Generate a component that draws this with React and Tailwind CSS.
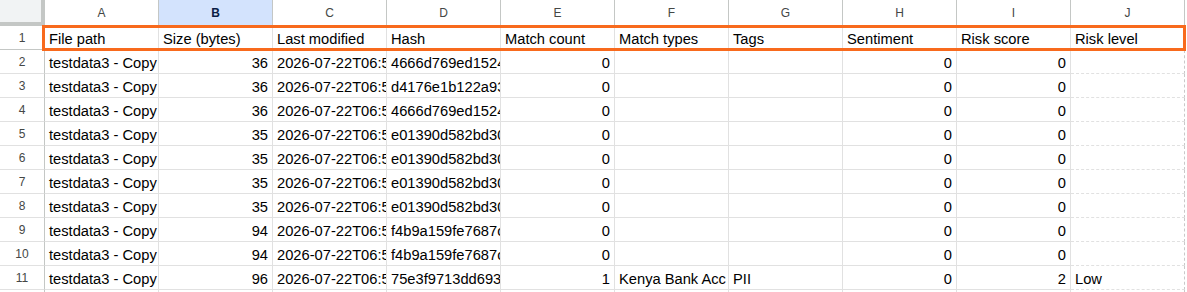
import React from "react";

const COLS = ["A", "B", "C", "D", "E", "F", "G", "H", "I", "J"];

const HEADERS = [
  "File path",
  "Size (bytes)",
  "Last modified",
  "Hash",
  "Match count",
  "Match types",
  "Tags",
  "Sentiment",
  "Risk score",
  "Risk level",
];

// [size, modified, hash, matchCount, matchTypes, tags, sentiment, riskScore, riskLevel]
const ROWS = [
  [36, "2026-07-22T06:55:41", "4666d769ed15246f0a3c", 0, "", "", 0, 0, ""],
  [36, "2026-07-22T06:55:41", "d4176e1b122a93b7c1de", 0, "", "", 0, 0, ""],
  [36, "2026-07-22T06:55:41", "4666d769ed15246f0a3c", 0, "", "", 0, 0, ""],
  [35, "2026-07-22T06:55:42", "e01390d582bd30a9f4e2", 0, "", "", 0, 0, ""],
  [35, "2026-07-22T06:55:42", "e01390d582bd30a9f4e2", 0, "", "", 0, 0, ""],
  [35, "2026-07-22T06:55:42", "e01390d582bd30a9f4e2", 0, "", "", 0, 0, ""],
  [35, "2026-07-22T06:55:42", "e01390d582bd30a9f4e2", 0, "", "", 0, 0, ""],
  [94, "2026-07-22T06:55:43", "f4b9a159fe7687c2d0b1", 0, "", "", 0, 0, ""],
  [94, "2026-07-22T06:55:43", "f4b9a159fe7687c2d0b1", 0, "", "", 0, 0, ""],
  [96, "2026-07-22T06:57:10", "75e3f9713dd6934ab8c5", 1, "Kenya Bank Acc No", "PII", 0, 2, "Low"],
];

const cellBase =
  "h-[24px] w-[114px] shrink-0 flex items-end pb-[1px] px-[4px] overflow-hidden whitespace-nowrap border-b border-r border-[#e1e1e1] leading-[17px]";

function Cell({ value, num, last }) {
  return (
    <div
      className={`${cellBase} ${num ? "justify-end" : "justify-start"} ${
        last ? "border-r-[#c9c9c9] border-dashed" : ""
      }`}
    >
      {value}
    </div>
  );
}

export default function App() {
  return (
    <div className="relative h-[292px] w-[1187px] overflow-hidden bg-white font-['Liberation_Sans',Arial,sans-serif] text-[14.7px] text-black">
      {/* column letters */}
      <div className="flex h-[26px]">
        <div className="h-[26px] w-[45px] shrink-0 border-b-[4px] border-r-[4px] border-[#c4c7c5] bg-[#f1f3f4]" />
        {COLS.map((c) => (
          <div
            key={c}
            className={`flex h-[26px] w-[114px] shrink-0 items-center justify-center border-b border-r border-[#c4c7c5] text-[12px] ${
              c === "B"
                ? "bg-[#d3e3fd] font-bold text-[#0b1d45]"
                : "bg-white text-[#444746]"
            }`}
          >
            {c}
          </div>
        ))}
      </div>

      {/* row 1: headers */}
      <div className="flex">
        <div className="flex h-[24px] w-[45px] shrink-0 items-center justify-center border-b border-r border-[#c4c7c5] text-[12px] text-[#444746]">
          1
        </div>
        {HEADERS.map((h, i) => (
          <Cell key={h} value={h} last={i === 9} />
        ))}
      </div>

      {/* data rows */}
      {ROWS.map((r, idx) => {
        const [size, mod, hash, count, types, tags, sent, score, level] = r;
        return (
          <div key={idx} className="flex">
            <div className="flex h-[24px] w-[45px] shrink-0 items-center justify-center border-b border-r border-[#c4c7c5] border-b-[#e1e1e1] text-[12px] text-[#444746]">
              {idx + 2}
            </div>
            <Cell value={`testdata3 - Copy (${idx + 1}).txt`} />
            <Cell value={size} num />
            <Cell value={mod} />
            <Cell value={hash} />
            <Cell value={count} num />
            <Cell value={types} />
            <Cell value={tags} />
            <Cell value={sent} num />
            <Cell value={score} num />
            <Cell value={level} last />
          </div>
        );
      })}

      {/* row 12, partially visible */}
      <div className="flex">
        <div className="h-[24px] w-[45px] shrink-0 border-r border-[#c4c7c5]" />
        {COLS.map((c, i) => (
          <div
            key={c}
            className={`h-[24px] w-[114px] shrink-0 border-r border-[#e1e1e1] ${
              i === 9 ? "border-dashed border-r-[#c9c9c9]" : ""
            }`}
          />
        ))}
      </div>

      {/* selection outline around header row */}
      <div className="pointer-events-none absolute left-[42px] top-[25px] h-[26px] w-[1144px] border-[3px] border-[#f86a1d]" />
    </div>
  );
}
